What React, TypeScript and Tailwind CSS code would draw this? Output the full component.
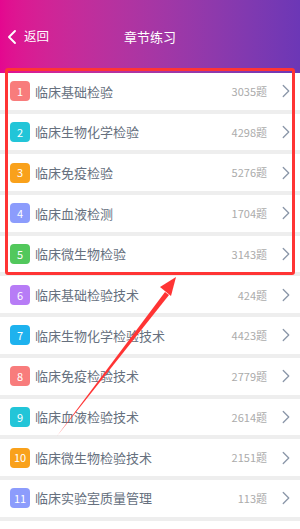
import { ChevronLeft, ChevronRight } from "lucide-react";

type Chapter = {
  name: string;
  count: number;
  color: string;
};

const chapters: Chapter[] = [
  { name: "临床基础检验", count: 3035, color: "bg-[#f87c7c]" },
  { name: "临床生物化学检验", count: 4298, color: "bg-[#22c5d8]" },
  { name: "临床免疫检验", count: 5276, color: "bg-[#f9a11b]" },
  { name: "临床血液检测", count: 1704, color: "bg-[#8c9cfc]" },
  { name: "临床微生物检验", count: 3143, color: "bg-[#52c85c]" },
  { name: "临床基础检验技术", count: 424, color: "bg-[#b77cf6]" },
  { name: "临床生物化学检验技术", count: 4423, color: "bg-[#1eb2ee]" },
  { name: "临床免疫检验技术", count: 2779, color: "bg-[#f87c7c]" },
  { name: "临床血液检验技术", count: 2614, color: "bg-[#22c5d8]" },
  { name: "临床微生物检验技术", count: 2151, color: "bg-[#f9a11b]" },
  { name: "临床实验室质量管理", count: 113, color: "bg-[#8c9cfc]" },
];

export default function App() {
  return (
    <div
      className="relative h-[529px] w-[300px] overflow-hidden bg-white"
      style={{ fontFamily: '"Noto Sans CJK SC", "Noto Sans", sans-serif' }}
    >
      {/* 顶部导航 */}
      <div className="flex h-[73px] items-center bg-linear-to-r from-[#e4078f] to-[#6c37b6] text-white">
        <div className="flex w-[60px] items-center">
          <ChevronLeft size={24} strokeWidth={1.9} />
          <span className="text-[12.5px] leading-none">返回</span>
        </div>
        <div className="flex-1 text-center text-[13px] leading-none">章节练习</div>
        <div className="w-[60px]" />
      </div>

      {/* 章节列表 */}
      <div className="flex flex-col">
        {chapters.map((c, i) => (
          <div key={i} className="border-b-4 border-[#eeeeee]">
            <div className="flex h-[36.7px] items-center pl-[10px] pr-[3px]">
              <span
                className={`flex h-[20px] w-[20px] shrink-0 items-center justify-center rounded-[4px] text-[11px] text-white ${c.color}`}
              >
                {i + 1}
              </span>
              <span className="ml-[5px] flex-1 truncate text-[13px] text-[#66707e]">{c.name}</span>
              <span className="text-[11px] text-[#ababab]">{c.count}题</span>
              <ChevronRight className="ml-[8px] text-[#8a96a8]" size={22} strokeWidth={1.4} />
            </div>
          </div>
        ))}
      </div>

      {/* 标注框 */}
      <div className="pointer-events-none absolute left-[5px] top-[68px] h-[207px] w-[290px] rounded-[3px] border-[3px] border-[#ff3434]" />

      {/* 标注箭头 */}
      <svg
        className="pointer-events-none absolute left-0 top-0"
        width="300"
        height="529"
        viewBox="0 0 300 529"
      >
        <polygon points="57,436 165,292 169,295" fill="#ff3434" />
        <polygon points="176,277 160,287 171,296" fill="#ff3434" />
      </svg>
    </div>
  );
}
